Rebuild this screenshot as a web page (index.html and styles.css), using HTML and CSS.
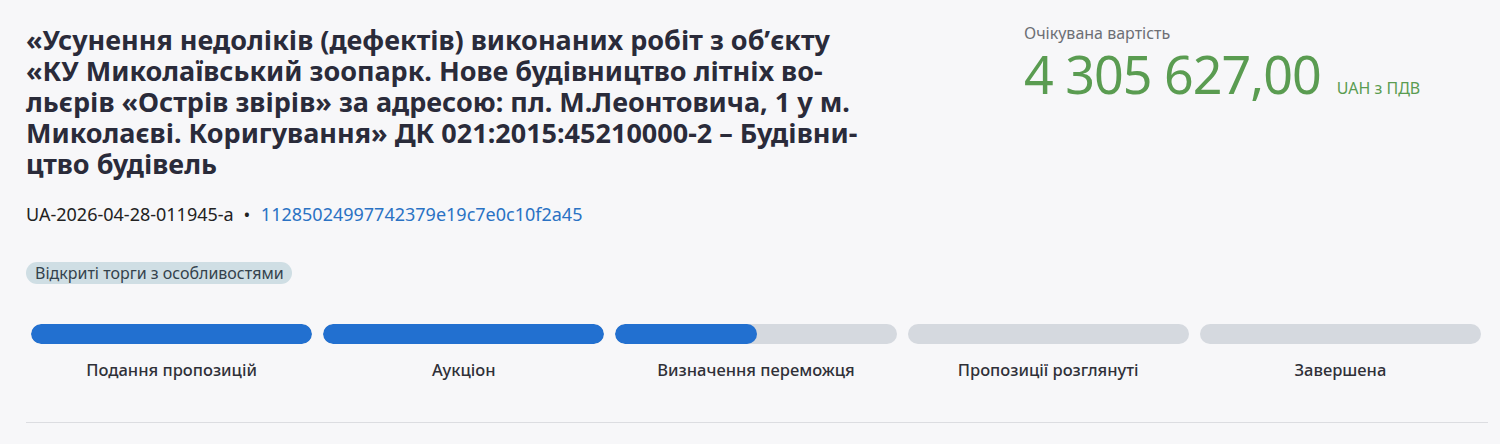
FILE: index.html
```html
<!DOCTYPE html>
<html lang="uk">
<head>
<meta charset="utf-8">
<title>Тендер</title>
<link rel="stylesheet" href="styles.css">
</head>
<body>
<main class="tender">
  <section class="head">
    <div class="info">
      <h1 class="title">«Усунення недоліків (дефектів) виконаних робіт з об’єкту «КУ Миколаївський зоопарк. Нове будівництво літніх во&shy;льєрів «Острів звірів» за адресою: пл. М.Леонтовича, 1 у м. Миколаєві. Коригування» ДК 021:2015:45210000-2 – Будівни&shy;цтво будівель</h1>
      <div class="ids">
        <span class="tender-id">UA-2026-04-28-011945-a</span>
        <span class="dot">•</span>
        <a class="hash" href="#">11285024997742379e19c7e0c10f2a45</a>
      </div>
      <span class="badge">Відкриті торги з особливостями</span>
    </div>
    <div class="price">
      <div class="price-label">Очікувана вартість</div>
      <div class="price-row">
        <span class="amount">4 305 627,00</span>
        <span class="currency">UAH з ПДВ</span>
      </div>
    </div>
  </section>

  <ol class="stages">
    <li class="stage">
      <div class="bar"><div class="fill" style="width:100%"></div></div>
      <span class="stage-name">Подання пропозицій</span>
    </li>
    <li class="stage">
      <div class="bar"><div class="fill" style="width:100%"></div></div>
      <span class="stage-name">Аукціон</span>
    </li>
    <li class="stage">
      <div class="bar"><div class="fill" style="width:50.5%"></div></div>
      <span class="stage-name">Визначення переможця</span>
    </li>
    <li class="stage">
      <div class="bar"><div class="fill" style="width:0%"></div></div>
      <span class="stage-name">Пропозиції розглянуті</span>
    </li>
    <li class="stage">
      <div class="bar"><div class="fill" style="width:0%"></div></div>
      <span class="stage-name">Завершена</span>
    </li>
  </ol>
</main>
</body>
</html>
```

FILE: styles.css
```css
html, body {
  margin: 0;
  padding: 0;
  background: #f7f7f9;
}

body {
  font-family: "Noto Sans", "Open Sans", sans-serif;
  color: #2b2c37;
}

.tender {
  padding: 24px 12px 0 26px;
}

.head {
  display: grid;
  grid-template-columns: 998px 1fr;
}

.info {
  display: flex;
  flex-direction: column;
  align-items: flex-start;
}

.title {
  margin: 0;
  width: 845px;
  font-size: 27px;
  line-height: 31px;
  font-weight: 700;
  color: #2a2b3a;
  hyphens: manual;
}

.ids {
  margin-top: 23px;
  font-size: 18px;
  line-height: 24px;
  color: #222;
}

.dot {
  margin: 0 6px 0 5px;
}

.hash {
  color: #2a72c4;
  text-decoration: none;
}

.badge {
  margin-top: 36px;
  padding: 0 8px 0 9px;
  height: 22px;
  line-height: 22px;
  border-radius: 11px;
  background: #cfdee4;
  color: #34424c;
  font-size: 16px;
}

.price-label {
  font-size: 16px;
  line-height: 18px;
  color: #6d6f75;
}

.price-row {
  display: flex;
  align-items: baseline;
  gap: 16px;
  margin-top: 7px;
  color: #5a9c51;
}

.amount {
  font-size: 52px;
  line-height: 50px;
  font-weight: 400;
  letter-spacing: -1px;
}

.currency {
  font-size: 16px;
}

.stages {
  list-style: none;
  margin: 40px 0 0;
  padding: 0 7px 0 5px;
  display: grid;
  grid-template-columns: repeat(5, 1fr);
  gap: 11px;
}

.stage {
  display: flex;
  flex-direction: column;
  align-items: center;
  gap: 15px;
}

.bar {
  width: 100%;
  height: 20px;
  border-radius: 10px;
  background: #d5d9df;
  overflow: hidden;
}

.fill {
  height: 100%;
  border-radius: 10px;
  background: #2270d0;
}

.stage-name {
  font-size: 16.5px;
  line-height: 22px;
  font-weight: 500;
  color: #2f3038;
}

.tender::after {
  content: "";
  display: block;
  margin-top: 41px;
  border-top: 1px solid #dcdde1;
}
```
